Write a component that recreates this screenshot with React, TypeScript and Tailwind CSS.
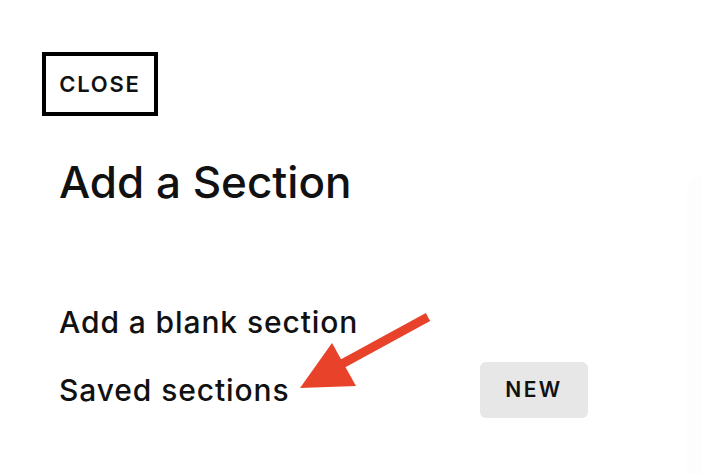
export default function App() {
  return (
    <div className="relative h-[474px] w-[702px] overflow-hidden bg-white font-['Inter','Liberation_Sans',sans-serif] text-[#111]">
      <div className="pl-[42px] pt-[52px]">
        <button className="flex h-[64px] w-[116px] items-center justify-center border-4 border-black pt-px text-[22px] font-semibold tracking-[0.08em]">
          CLOSE
        </button>

        <div className="pl-[17px] pr-[114px]">
          <h1 className="mt-[44px] text-[44px] leading-[44px] font-medium">Add a Section</h1>

          <ul className="mt-[84px]">
            <li className="flex h-[68px] items-center text-[30px] font-medium tracking-[0.03em]">Add a blank section</li>
            <li className="flex h-[68px] items-center text-[30px] font-medium tracking-[0.03em]">
              Saved sections
              <span className="ml-auto flex h-[56px] w-[108px] items-center justify-center rounded-md bg-[#e7e7e7] text-[21px] font-semibold tracking-[0.12em]">
                NEW
              </span>
            </li>
          </ul>
        </div>
      </div>

      {/* page preview edge peeking in on the right */}
      <div className="absolute left-[689px] top-[178px] h-[320px] w-[40px] rounded-tl-md bg-[#fdfdfd] shadow-[0_0_8px_rgba(0,0,0,0.015)]" />

      {/* annotation arrow */}
      <svg className="pointer-events-none absolute left-0 top-0" width="702" height="474" viewBox="0 0 702 474">
        <line x1="428" y1="317" x2="340" y2="365" stroke="#e8432a" strokeWidth="9" />
        <polygon points="300,388 332,343 356,386" fill="#e8432a" />
      </svg>
    </div>
  )
}
